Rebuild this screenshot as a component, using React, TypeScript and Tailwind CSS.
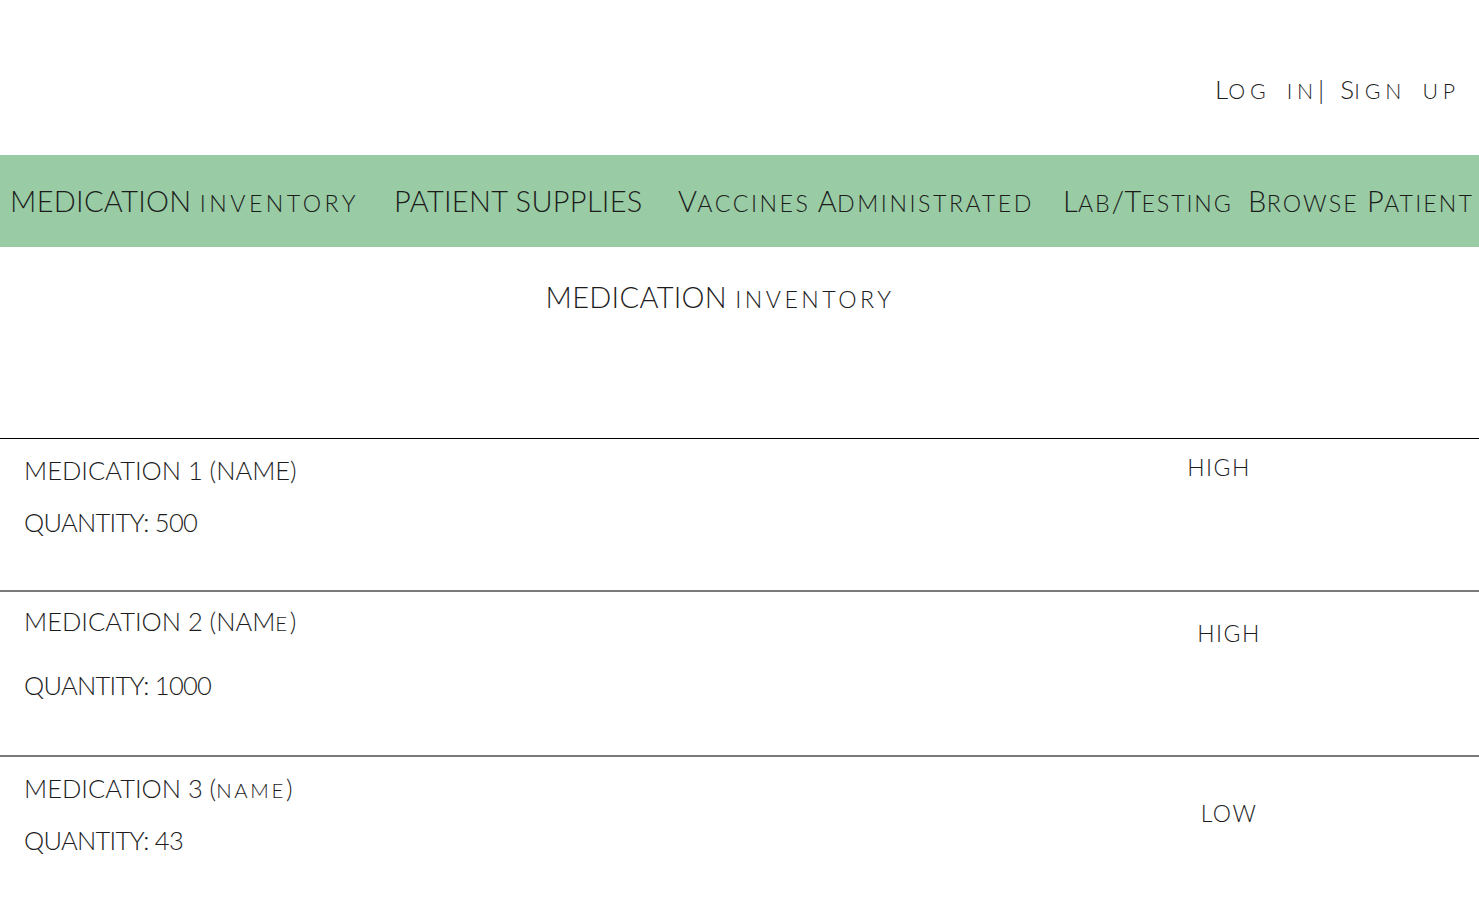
import React from "react";

function SC({ text, small = "text-[0.8em] tracking-[0.13em]" }: { text: string; small?: string }) {
  const parts = text.match(/[a-z]+|[^a-z]+/g) || [];
  return (
    <>
      {parts.map((p, i) =>
        /^[a-z]+$/.test(p) ? (
          <span key={i} className={`uppercase ${small}`}>
            {p}
          </span>
        ) : (
          <span key={i}>{p}</span>
        )
      )}
    </>
  );
}

const rows = [
  { name: "MEDICATION 1 (NAME)", qty: "QUANTITY: 500", status: "HIGH", rowCls: "h-[152px] border-t border-black", nameCls: "pt-[13px]", qtyCls: "mt-[16px]", statusCls: "mr-[210px] pt-[13px]" },
  { name: "MEDICATION 2 (NAMe)", qty: "QUANTITY: 1000", status: "HIGH", rowCls: "h-[165px] border-t-2 border-[#7a7a7a]", nameCls: "pt-[11px]", qtyCls: "mt-[26px]", statusCls: "mr-[200px] pt-[26px]" },
  { name: "MEDICATION 3 (name)", qty: "QUANTITY: 43", status: "LOW", rowCls: "h-[167px] border-t-2 border-[#7a7a7a]", nameCls: "pt-[13px]", qtyCls: "mt-[14px]", statusCls: "mr-[200px] pt-[41px]" },
];

const navItems = [
  { t: "MEDICATION inventory", w: "w-[384px]", s: "text-[0.8em] tracking-[0.15em]" },
  { t: "PATIENT SUPPLIES", w: "w-[284px]", s: "text-[0.8em] tracking-[0.13em]" },
  { t: "Vaccines Administrated", w: "w-[385px]", s: "text-[0.8em] tracking-[0.11em]" },
  { t: "Lab/Testing", w: "w-[185px]", s: "text-[0.8em] tracking-[0.08em]" },
  { t: "Browse Patient", w: "flex-1", s: "text-[0.8em] tracking-[0.09em]" },
];

export default function App() {
  return (
    <div className="min-h-screen w-full bg-white text-[#1c1c1c] font-['Lato','Open_Sans',sans-serif] font-light overflow-hidden">
      <header className="h-[155px] flex justify-end items-start pt-[69px] pr-[19px]">
        <a className="text-[26px] leading-[40px] whitespace-nowrap [word-spacing:9px]">
          <SC text="Log in| Sign up" small="text-[0.82em] tracking-[0.23em]" />
        </a>
      </header>
      <nav className="h-[92px] bg-[#99cba4] flex items-center pl-[10px] text-[29px] tracking-[0.3px] whitespace-nowrap">
        {navItems.map((n) => (
          <span key={n.t} className={`${n.w} shrink-0`}>
            <SC text={n.t} small={n.s} />
          </span>
        ))}
      </nav>
      <section className="h-[191px] flex justify-center pt-[30px] pr-[39px]">
        <h1 className="text-[29px] leading-[40px] tracking-[0.3px] whitespace-nowrap">
          <SC text="MEDICATION inventory" small="text-[0.8em] tracking-[0.15em]" />
        </h1>
      </section>
      <div>
        {rows.map((r) => (
          <div key={r.name} className={`flex justify-between ${r.rowCls}`}>
            <div className={`pl-[24px] ${r.nameCls}`}>
              <div className="text-[25.5px] leading-[36px] whitespace-nowrap">
                <SC text={r.name} />
              </div>
              <div className={`text-[25.5px] leading-[36px] tracking-[-0.7px] whitespace-nowrap ${r.qtyCls}`}>{r.qty}</div>
            </div>
            <div className={`w-[100px] text-center text-[23px] leading-[30px] tracking-[1.5px] ${r.statusCls}`}>{r.status}</div>
          </div>
        ))}
      </div>
    </div>
  );
}
